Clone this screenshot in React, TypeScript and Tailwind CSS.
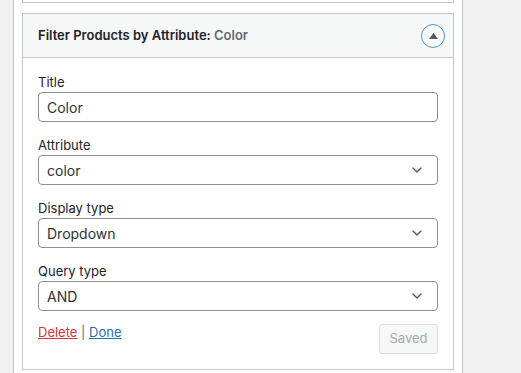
import { ChevronDown } from "lucide-react";

type Field = {
    label: string;
    value: string;
    select?: boolean;
};

const fields: Field[] = [
    { label: "Title", value: "Color" },
    { label: "Attribute", value: "color", select: true },
    { label: "Display type", value: "Dropdown", select: true },
    { label: "Query type", value: "AND", select: true },
];

const font = { fontFamily: "Inter, 'Noto Sans', 'Liberation Sans', sans-serif" };

function FormField({ field }: { field: Field }) {
    return (
        <div className="mb-[13px]">
            <label className="block h-[20px] text-[13px] leading-[20px] text-[#1d2327]">{field.label}</label>
            <div className="h-[30px] border border-[#8c8f94] rounded-[4px] bg-white flex items-center justify-between pl-2 pr-[12px]">
                <span className="text-[14px] text-[#2c3338]">{field.value}</span>
                {field.select && <ChevronDown size={16} strokeWidth={2} className="text-[#50575e]" />}
            </div>
        </div>
    );
}

export default function App() {
    return (
        <div className="w-[521px] h-[373px] bg-[#f0f0f1] flex overflow-hidden" style={font}>
            <div className="w-[13px] shrink-0" />

            {/* Sidebar area */}
            <div className="w-[450px] shrink-0 bg-white border-x border-[#c3c4c7] px-[8px]">
                {/* previous widget, only its bottom edge shows */}
                <div className="h-[3px] border-x border-b border-[#c3c4c7]" />

                {/* Widget */}
                <div className="mt-[10px] border border-[#c3c4c7] bg-white">
                    <div className="h-[44px] bg-[#f6f7f7] border-b border-[#c3c4c7] flex items-center justify-between pl-[15px] pr-[8px]">
                        <h3 className="text-[13px] font-semibold text-[#1d2327]">
                            Filter Products by Attribute:<span className="text-[#646970]"> Color</span>
                        </h3>
                        <button className="w-[24px] h-[24px] rounded-full border-[1.5px] border-[#4f94d4] flex items-center justify-center">
                            <svg width="9" height="6" viewBox="0 0 9 6">
                                <path d="M4.5 0 L9 6 L0 6 Z" fill="#50575e" />
                            </svg>
                        </button>
                    </div>

                    <div className="px-[15px] pt-[14px] pb-[15px]">
                        {fields.map((f) => (
                            <FormField key={f.label} field={f} />
                        ))}

                        <div className="flex items-start justify-between -mt-[2px]">
                            <div className="text-[13px] leading-[20px] text-[#646970]">
                                <a className="text-[#d63638] underline">Delete</a> |{" "}
                                <a className="text-[#2271b1] underline">Done</a>
                            </div>
                            <button className="mt-[2px] h-[30px] w-[59px] rounded-[3px] border border-[#dcdcde] bg-[#f6f7f7] text-[13px] text-[#a7aaad]">
                                Saved
                            </button>
                        </div>
                    </div>
                </div>
            </div>
        </div>
    );
}
